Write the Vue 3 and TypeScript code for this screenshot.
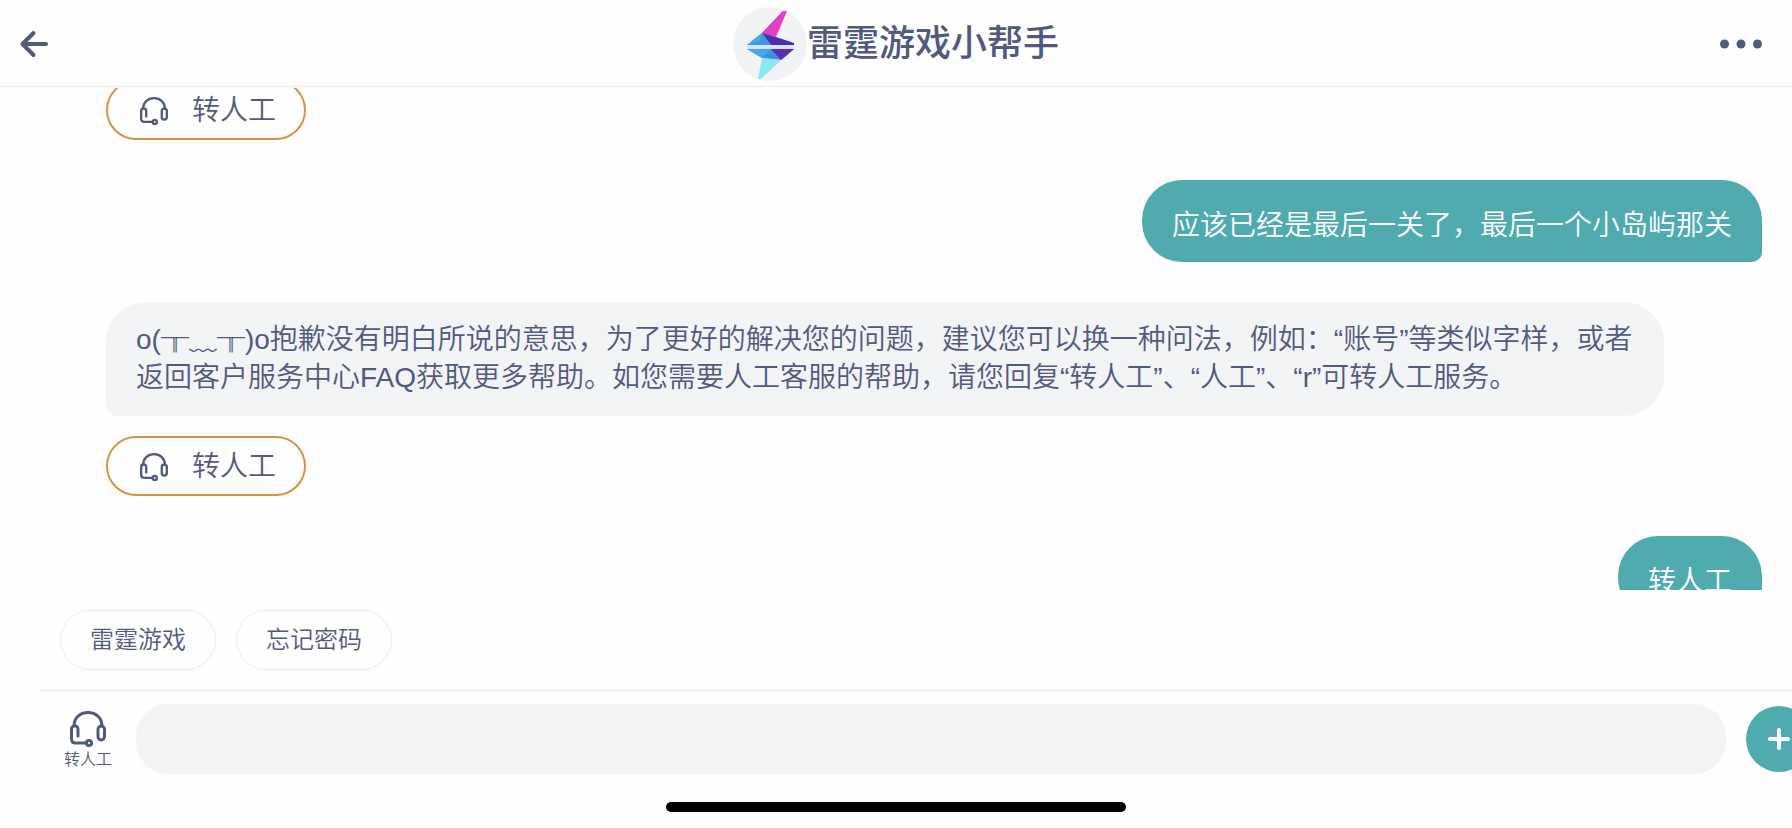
<script setup lang="ts">
import { ref } from 'vue'

interface Message {
  id: number
  from: 'bot' | 'user'
  face?: string
  text: string
  transfer?: boolean
}

const draft = ref('')

const messages: Message[] = [
  { id: 1, from: 'bot', text: '', transfer: true },
  { id: 2, from: 'user', text: '应该已经是最后一关了，最后一个小岛屿那关' },
  {
    id: 3,
    from: 'bot',
    face: '╥﹏╥',
    text: '抱歉没有明白所说的意思，为了更好的解决您的问题，建议您可以换一种问法，例如：“账号”等类似字样，或者返回客户服务中心FAQ获取更多帮助。如您需要人工客服的帮助，请您回复“转人工”、“人工”、“r”可转人工服务。',
    transfer: true,
  },
  { id: 4, from: 'user', text: '转人工' },
]

const topics: string[] = ['雷霆游戏', '忘记密码']
</script>

<template>
  <div class="chat">
    <header class="topbar">
      <button class="icon-button back" type="button" aria-label="返回">
        <svg width="28" height="26" viewBox="0 0 28 26" aria-hidden="true">
          <path d="M26 13H3M13.500 2L2.500 13L13.500 24" fill="none" stroke="currentColor" stroke-width="4" stroke-linecap="round" stroke-linejoin="round" />
        </svg>
      </button>
      <h1 class="title">
        <svg class="avatar" viewBox="0 0 74 74" aria-hidden="true">
          <circle cx="37" cy="37" r="37" fill="#f2f3f5" />
          <path d="M50 4L54 4L43 30L29 26Z" fill="#ea3cc4" />
          <path d="M50 4L29 26L36 28Z" fill="#dd3fc4" />
          <path d="M29 26L14 38H38Z" fill="#3f97de" />
          <path d="M29 26L38 38H61V36L43 30Z" fill="#4a2fae" />
          <path d="M29 26L14 38L27 34Z" fill="#45aee4" />
          <path d="M14 42H61L48 53L29 51Z" fill="#3f8fe0" />
          <path d="M38 42H61L48 53Z" fill="#5a2fb0" />
          <path d="M14 42H38L29 51Z" fill="#49a6ea" />
          <path d="M29 51L48 53L28 72L25 72Z" fill="#8ce6f4" />
          <path d="M14 38H61V42H14Z" fill="#dfe3f8" />
        </svg>
        <span>雷霆游戏小帮手</span>
      </h1>
      <button class="icon-button more" type="button" aria-label="更多">
        <svg width="42" height="10" viewBox="0 0 42 10" fill="currentColor" aria-hidden="true">
          <circle cx="4.500" cy="5" r="4.500" />
          <circle cx="21" cy="5" r="4.500" />
          <circle cx="37.500" cy="5" r="4.500" />
        </svg>
      </button>
    </header>

    <main class="log">
      <div class="thread">
        <div v-for="m in messages" :key="m.id" class="message" :class="m.from">
          <p v-if="m.text" class="bubble"><template v-if="m.face">o(<span class="face">{{ m.face }}</span>)o</template>{{ m.text }}</p>
          <button v-if="m.transfer" class="transfer" type="button">
            <svg class="headset" viewBox="0 0 36 36" aria-hidden="true">
              <path d="M4 15C4 7 10 1.500 18 1.500S32 7 32 15M8 25V18A3 3 0 0 0 1.500 18V28Q1.500 32 5.500 32H16" />
              <rect x="28" y="15" width="6.500" height="14" rx="3.200" />
              <circle cx="19" cy="32" r="2.600" />
            </svg>
            <span>转人工</span>
          </button>
        </div>
      </div>
    </main>

    <footer class="footer">
      <nav class="topics">
        <button v-for="t in topics" :key="t" class="topic" type="button">{{ t }}</button>
      </nav>
      <form class="composer" @submit.prevent>
        <button class="agent" type="button">
          <svg class="headset large" viewBox="0 0 36 36" aria-hidden="true">
            <path d="M4 15C4 7 10 1.500 18 1.500S32 7 32 15M8 25V18A3 3 0 0 0 1.500 18V28Q1.500 32 5.500 32H16" />
            <rect x="28" y="15" width="6.500" height="14" rx="3.200" />
            <circle cx="19" cy="32" r="2.600" />
          </svg>
          <span>转人工</span>
        </button>
        <input v-model="draft" class="field" type="text" aria-label="输入消息" />
        <button class="add" type="button" aria-label="添加">
          <svg width="22" height="22" viewBox="0 0 22 22" aria-hidden="true">
            <path d="M11 2V20M2 11H20" fill="none" stroke="currentColor" stroke-width="4" stroke-linecap="round" />
          </svg>
        </button>
      </form>
      <div class="home-bar"></div>
    </footer>
  </div>
</template>

<style>
body {
  margin: 0;
  background: #fefefe;
}
</style>

<style scoped>
.chat {
  display: flex;
  flex-direction: column;
  height: 100vh;
  overflow: hidden;
  color: #525a7c;
  font-family: "Liberation Sans", "Noto Sans CJK SC", sans-serif;
  font-weight: 350;
}

button {
  margin: 0;
  padding: 0;
  border: 0;
  background: none;
  color: inherit;
  font: inherit;
  cursor: pointer;
}

svg {
  display: block;
  flex: none;
  overflow: visible;
}

.topbar {
  box-sizing: border-box;
  display: grid;
  grid-template-columns: 1fr auto 1fr;
  align-items: center;
  height: 87px;
  padding: 2px 30px 0 20px;
  border-bottom: 1px solid #ececec;
}

.back {
  justify-self: start;
}

.more {
  justify-self: end;
}

.title {
  display: flex;
  align-items: center;
  margin: 0 0 0 10px;
  font-size: 36px;
  line-height: 48px;
  font-weight: 500;
}

.avatar {
  width: 74px;
  height: 74px;
}

.log {
  flex: 1;
  min-height: 0;
  margin-top: 1px;
  overflow: hidden;
}

.thread {
  display: flex;
  flex-direction: column;
  gap: 40px;
  margin-top: -8px;
  padding: 0 30px 0 106px;
}

.message {
  display: flex;
  flex-direction: column;
  gap: 20px;
}

.bot {
  align-items: flex-start;
  margin-right: 98px;
}

.user {
  align-items: flex-end;
}

.bubble {
  margin: 0;
  padding: 19px 30px;
  border-radius: 40px 40px 40px 12px;
  background: #f3f4f6;
  font-size: 28px;
  line-height: 38px;
}

.user .bubble {
  padding: 27px 30px 17px;
  border-radius: 40px 40px 10px 40px;
  background: #50abae;
  color: #ffffff;
}

.face {
  font-family: "Noto Sans CJK SC", sans-serif;
  font-weight: 300;
  line-height: 28px;
}

.transfer {
  display: flex;
  align-items: center;
  gap: 24px;
  box-sizing: border-box;
  height: 60px;
  padding: 2px 28px 0 32px;
  border: 2px solid #dc9140;
  border-radius: 30px;
  font-size: 28px;
  line-height: 38px;
}

.headset {
  width: 28px;
  height: 28px;
  fill: none;
  stroke: currentColor;
  stroke-width: 3;
  stroke-linecap: round;
}

.large {
  width: 36px;
  height: 36px;
}

.topics {
  display: flex;
  gap: 20px;
  padding: 20px 60px;
}

.topic {
  box-sizing: border-box;
  height: 60px;
  padding: 0 29px;
  border: 1px solid #ececee;
  border-radius: 30px;
  font-size: 24px;
  line-height: 38px;
}

.composer {
  display: flex;
  align-items: center;
  margin: 0 -20px 0 40px;
  padding: 13px 0 28px;
  border-top: 1px solid #ececec;
}

.agent {
  display: flex;
  flex-direction: column;
  align-items: center;
  width: 96px;
  padding-top: 6px;
  font-size: 16px;
  line-height: 26px;
}

.field {
  flex: 1;
  min-width: 0;
  box-sizing: border-box;
  height: 70px;
  padding: 0 30px;
  border: 0;
  border-radius: 32px;
  outline: 0;
  background: #f3f4f6;
  color: inherit;
  font: inherit;
  font-size: 28px;
}

.add {
  display: grid;
  place-items: center;
  width: 66px;
  height: 66px;
  margin-left: 20px;
  border-radius: 50%;
  background: #50abae;
  color: #ffffff;
}

.home-bar {
  width: 460px;
  height: 10px;
  margin: 0 auto 16px;
  border-radius: 5px;
  background: #000000;
}
</style>
